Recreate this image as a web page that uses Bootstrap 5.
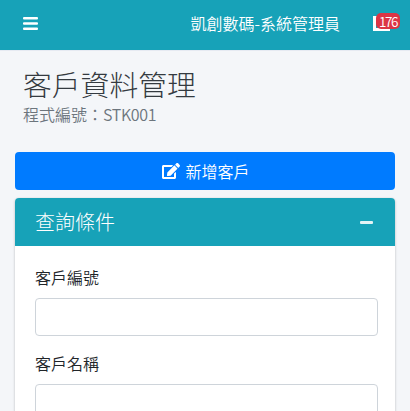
<!DOCTYPE html>
<html lang="zh-Hant">
<head>
<meta charset="utf-8">
<title>客戶資料管理</title>
<link href="https://cdn.jsdelivr.net/npm/bootstrap@5.3.0/dist/css/bootstrap.min.css" rel="stylesheet">
<style>
html,body{height:411px;overflow:hidden}
body{background:#f4f6f9;font-family:"Noto Sans CJK TC",sans-serif;color:#212529;font-size:16px;font-weight:350}
.topbar{height:51px;background:#17a2b8;border-bottom:1px solid #e6eaf2;padding:0 20px 4px 23px}
.brandname{color:#fff;font-size:16px;margin-left:auto;margin-right:33px;line-height:24px}
.mailbox{position:relative;width:17px;height:15px}
.cntbadge{position:absolute;left:3px;top:-3px;width:24px;text-align:center;background:#dc3545;color:#fff;font-size:13.5px;letter-spacing:-1.4px;line-height:16px;border-radius:5px}
.pagehead{padding:14px 23px 0;height:101px}
.pagetitle{font-size:28.8px;font-weight:300;line-height:38px;margin:0;color:#343a40}
.pagesub{font-size:16px;line-height:22px;color:#6c757d}
.pagecode{letter-spacing:-.35px}
.addbtn{background:#007bff;border:0;color:#fff;font-size:16px;font-weight:350;height:38px;border-radius:4px;margin:0 15px;display:flex;align-items:center;justify-content:center;gap:5px;width:380px;padding:0 0 0 2px}
.qcard{margin:8px 15px 0;width:380px;border:0;border-radius:4px;box-shadow:0 0 1px rgba(0,0,0,.125),0 1px 3px rgba(0,0,0,.2)}
.qhead{background:#17a2b8;color:#fff;height:48px;padding:0 22px 0 20px;font-size:20px;font-weight:300;border:0;border-radius:4px 4px 0 0!important}
.qminus{width:13px;height:3px;background:#e3f3f5;border-radius:1px}
.qbody{padding:19px 17px 0 20px}
.qlabel{font-size:16px;line-height:24px;margin-bottom:9px;display:block}
.qinput{height:38px;border:1px solid #ced4da;border-radius:4px}
.qgroup{margin-bottom:15px}
</style>
</head>
<body>
<nav class="topbar d-flex align-items-center">
<svg width="15" height="13" viewBox="0 0 15 13" fill="#fff"><rect y="0" width="15" height="2.6" rx="1"/><rect y="5.2" width="15" height="2.6" rx="1"/><rect y="10.4" width="15" height="2.6" rx="1"/></svg>
<span class="brandname">凱創數碼-系統管理員</span>
<span class="mailbox"><svg class="d-block" width="17" height="15" viewBox="0 0 17 15" fill="#fff"><path d="M0 0h17v15H0z"/><path d="M3 3h11v9H3z" fill="#17a2b8"/></svg><span class="cntbadge">176</span></span>
</nav>
<header class="pagehead">
<h1 class="pagetitle">客戶資料管理</h1>
<div class="pagesub">程式編號：<span class="pagecode">STK001</span></div>
</header>
<button class="btn addbtn" type="button">
<svg width="18" height="16" viewBox="0 0 576 512" fill="#fff"><path d="M402.6 83.2l90.2 90.2c3.8 3.8 3.8 10 0 13.8L274.4 405.6l-92.8 10.3c-12.4 1.4-22.9-9.1-21.5-21.5l10.3-92.8L388.8 83.2c3.8-3.8 10-3.8 13.8 0zm162-22.9l-48.8-48.8c-15.2-15.2-39.9-15.2-55.2 0l-35.4 35.4c-3.8 3.8-3.8 10 0 13.8l90.2 90.2c3.8 3.8 10 3.8 13.8 0l35.4-35.4c15.2-15.3 15.2-40 0-55.2zM384 346.2V448H64V128h229.8c3.2 0 6.2-1.3 8.5-3.5l40-40c7.6-7.6 2.2-20.5-8.5-20.5H48C21.5 64 0 85.5 0 112v352c0 26.5 21.5 48 48 48h352c26.5 0 48-21.5 48-48V306.2c0-10.7-12.9-16-20.5-8.5l-40 40c-2.2 2.3-3.5 5.3-3.5 8.5z"/></svg>
新增客戶</button>
<div class="card qcard">
<div class="card-header qhead d-flex align-items-center justify-content-between"><span>查詢條件</span><span class="qminus"></span></div>
<div class="card-body qbody">
<div class="qgroup"><label class="qlabel" for="f1">客戶編號</label><input id="f1" class="form-control qinput" type="text"></div>
<div class="qgroup"><label class="qlabel" for="f2">客戶名稱</label><input id="f2" class="form-control qinput" type="text"></div>
</div>
</div>
<script src="https://cdn.jsdelivr.net/npm/bootstrap@5.3.0/dist/js/bootstrap.bundle.min.js"></script>
</body>
</html>
